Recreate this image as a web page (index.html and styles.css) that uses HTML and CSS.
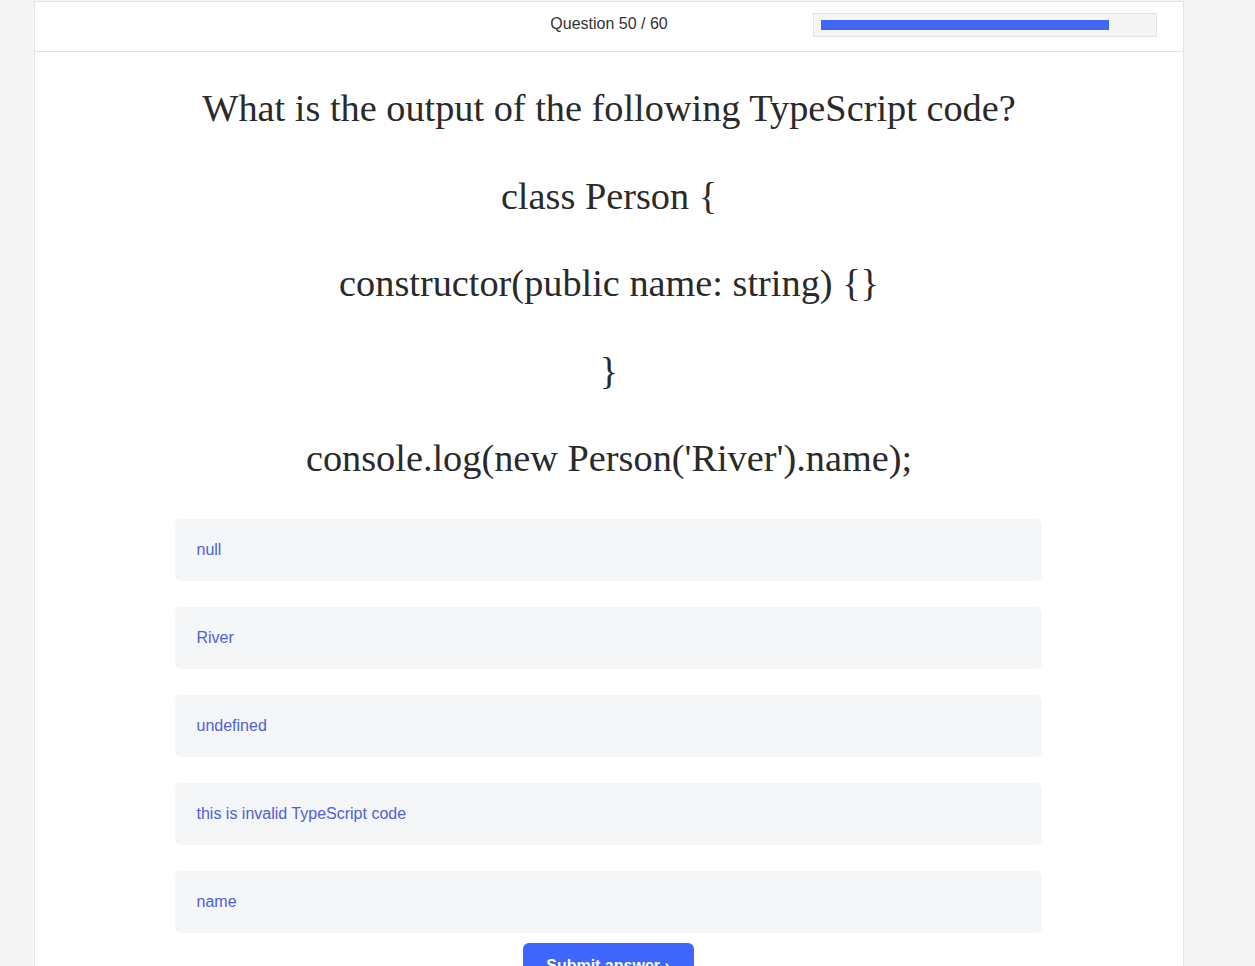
FILE: index.html
```html
<!DOCTYPE html>
<html lang="en">
<head>
<meta charset="utf-8">
<title>Quiz</title>
<link rel="stylesheet" href="styles.css">
</head>
<body>
<div class="card">
  <header class="top">
    <div class="spacer"></div>
    <div class="counter">Question 50 / 60</div>
    <div class="progress"><div class="fill" style="width:288px"></div></div>
  </header>
  <main class="body">
    <div class="question">
      <p>What is the output of the following TypeScript code?</p>
      <p>class Person {</p>
      <p>constructor(public name: string) {}</p>
      <p>}</p>
      <p>console.log(new Person('River').name);</p>
    </div>
    <div class="options">
      <div class="option">null</div>
      <div class="option">River</div>
      <div class="option">undefined</div>
      <div class="option">this is invalid TypeScript code</div>
      <div class="option">name</div>
    </div>
    <button class="submit">Submit answer ›</button>
  </main>
</div>
</body>
</html>
```
FILE: styles.css
```css
html, body {
  margin: 0;
  padding: 0;
  background: #f5f5f5;
  height: 966px;
  overflow: hidden;
}
.card {
  margin: 1px 0 0 34px;
  width: 1148px;
  min-height: 1200px;
  background: #fff;
  border: 1px solid #e4e4e4;
}
.top {
  height: 49px;
  border-bottom: 1px solid #e4e4e4;
  display: grid;
  grid-template-columns: 1fr auto 1fr;
  align-items: center;
}
.counter {
  font-family: "Liberation Sans", Arial, sans-serif;
  font-size: 16px;
  color: #333;
  padding-bottom: 5px;
}
.progress {
  justify-self: end;
  margin-right: 26px;
  width: 342px;
  height: 22px;
  border: 1px solid #e4e4e4;
  background: #f5f5f5;
  box-sizing: content-box;
  padding: 0;
  display: flex;
  align-items: center;
  margin-bottom: 3px;
}
.fill {
  height: 10px;
  margin-left: 7px;
  background: #4166f5;
}
.body {
  display: flex;
  flex-direction: column;
  align-items: center;
}
.question {
  padding-top: 30px;
  display: flex;
  flex-direction: column;
  gap: 35px;
  text-align: center;
  font-family: "Liberation Serif", Georgia, serif;
  font-size: 38.3px;
  line-height: 52.5px;
  color: #2a2a2a;
}
.question p { margin: 0; }
.options {
  margin-top: 34px;
  margin-right: 2px;
  width: 867px;
  display: flex;
  flex-direction: column;
  gap: 26px;
}
.option {
  height: 62px;
  box-sizing: border-box;
  padding: 1px 22px 0;
  display: flex;
  align-items: center;
  background: #f5f6f8;
  border-radius: 6px;
  font-family: "Liberation Sans", Arial, sans-serif;
  font-size: 16px;
  color: #5060d6;
}
.submit {
  margin-top: 10px;
  margin-right: 2px;
  width: 171px;
  height: 44px;
  border: 0;
  border-radius: 6px;
  background: #3e66fb;
  color: #fff;
  font-family: "Liberation Sans", Arial, sans-serif;
  font-weight: bold;
  font-size: 16px;
  padding-top: 4px;
}
```
